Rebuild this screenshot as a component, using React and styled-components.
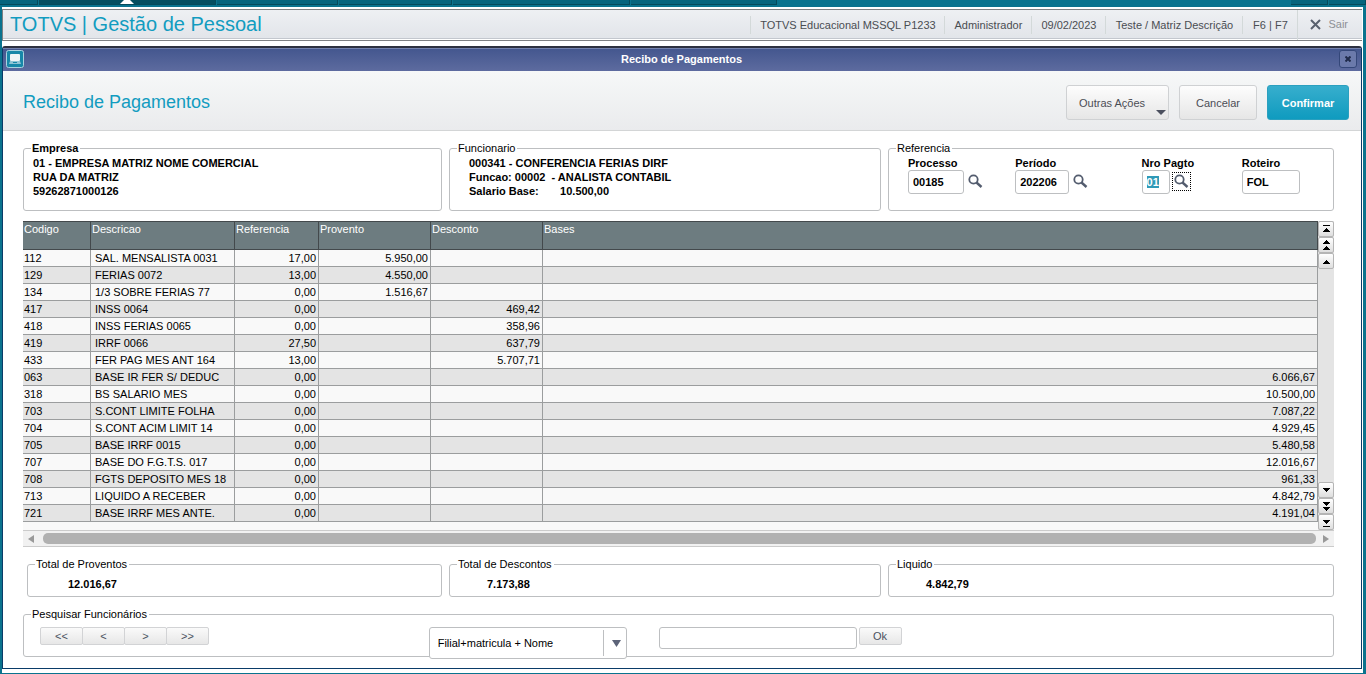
import React from "react";
import styled, { createGlobalStyle } from "styled-components";

const Global = createGlobalStyle`
  * { box-sizing: border-box; }
  body { margin: 0; background: #0a738e; font: 11px/14px "Liberation Sans", Arial, sans-serif; color: #000; }
  button, input, select { font: inherit; color: inherit; margin: 0; }
`;

const Page = styled.div`
  min-height: 100vh;
  display: flex;
  flex-direction: column;
  padding: 0 3px 1px 2px;
`;
const TabStrip = styled.nav`
  height: 7px;
  margin: 0 -3px 0 -2px;
  padding-bottom: 2px;
  display: flex;
  gap: 1px;
`;
const Tab = styled.span`
  width: ${(p) => p.$w}px;
  background: ${(p) => (p.$active ? "#054e60" : "#06647d")};
  border: solid #054a5b;
  border-width: 0 1px 1px 0;
  display: flex;
  justify-content: center;
  align-items: flex-end;
`;
const TabGap = styled.span`flex: 1;`;
const Frame = styled.div`
  flex: 1;
  display: flex;
  flex-direction: column;
  background: #fff;
  padding: 2px 1px 4px 0;
`;
const Header = styled.header`
  height: 32px;
  border: 1px solid #7e8083;
  border-right: 0;
  box-shadow: inset 0 -1px #fff, inset 0 -2px #c3c7ce;
  background: linear-gradient(#eef0f3, #e1e4e9);
  display: flex;
  align-items: stretch;
  justify-content: space-between;
`;
const AppName = styled.h1`
  margin: 0;
  padding-left: 7px;
  font-size: 20px;
  font-weight: 400;
  line-height: 29px;
  color: #129cc0;
`;
const Status = styled.div`
  display: grid;
  grid-template-columns: 194px 87px 74px 137px 55px auto;
  align-items: center;
  color: #4a4d52;
`;
const StatusItem = styled.span`
  border-left: 1px solid #d3d9d9;
  line-height: 18px;
  text-align: center;
  white-space: nowrap;
`;
const Exit = styled.button`
  align-self: stretch;
  border: 0;
  border-left: 1px solid #d3d9d9;
  background: none;
  padding: 0 14px 2px 12px;
  display: flex;
  align-items: center;
  gap: 7px;
  color: #8d9095;
`;
const Window = styled.main`
  flex: 1;
  margin-top: 5px;
  border: 1px solid #0a3b68;
  border-top: 2px solid #2d3140;
  border-radius: 3px 3px 0 0;
  display: flex;
  flex-direction: column;
`;
const TitleBar = styled.div`
  height: 23px;
  padding: 0 4px 2px 3px;
  display: grid;
  grid-template-columns: 18px 1fr 18px;
  align-items: center;
  background: linear-gradient(#43568e, #5d6b9f);
  box-shadow: inset 0 1px #7482ae;
  color: #fff;
  font-weight: 700;
  text-align: center;
`;
const CloseButton = styled.button`
  width: 18px;
  height: 18px;
  padding: 0;
  display: grid;
  place-items: center;
  border: 1px solid #344779;
  border-radius: 3px;
  background: #6b7aab;
`;
const Toolbar = styled.div`
  height: 60px;
  padding: 4px 12px 0 20px;
  display: flex;
  align-items: center;
  gap: 10px;
  border-bottom: 1px solid #d3d5d6;
  background: linear-gradient(#f6f8f8, #eaebed);
`;
const Heading = styled.h2`
  margin: 0 auto 0 0;
  padding-bottom: 2px;
  font-size: 18px;
  line-height: 22px;
  font-weight: 400;
  color: #129cc0;
`;
const ActionButton = styled.button`
  position: relative;
  height: 35px;
  width: ${(p) => p.$w}px;
  padding: 0 ${(p) => (p.$menu ? 24 : 0)}px 0 ${(p) => (p.$menu ? 12 : 0)}px;
  white-space: nowrap;
  border: 1px solid ${(p) => (p.$primary ? "#2ba0bf" : "#cfd1d3")};
  border-radius: 3px;
  background: ${(p) => (p.$primary ? "linear-gradient(#37aecd, #0f9bbf)" : "linear-gradient(#fdfdfd, #e6e6e6)")};
  color: ${(p) => (p.$primary ? "#fff" : "#4b4d55")};
  font-weight: ${(p) => (p.$primary ? 700 : 400)};
`;
const MenuMark = styled.svg`
  position: absolute;
  right: 2px;
  bottom: 4px;
`;
const Body = styled.div`
  padding: 10px 27px 11px 20px;
  display: flex;
  flex-direction: column;
  gap: 10px;
`;
const Columns = styled.div`
  display: grid;
  grid-template-columns: 419fr 432fr 446fr;
  gap: 7px;
`;
const Group = styled.fieldset`
  min-width: 0;
  margin: 0 0 0 ${(p) => p.$inset || 0}px;
  padding: 0;
  height: ${(p) => p.$h}px;
  border: 1px solid #bdbfc1;
  border-radius: 3px;
`;
const Legend = styled.legend`
  margin-left: 7px;
  padding: 0 2px 0 1px;
  font-weight: ${(p) => (p.$strong ? 700 : 400)};
`;
const Lines = styled.div`
  padding: 1px 0 0 ${(p) => p.$left}px;
  font-weight: 700;
  white-space: pre;
`;
const Total = styled.output`
  display: block;
  padding: 6px 0 0 ${(p) => p.$left}px;
  font-weight: 700;
`;
const Fields = styled.div`
  display: grid;
  grid-template-columns: 107fr 126fr 100fr 91fr;
  padding: 1px 0 0 19px;
`;
const Field = styled.div`
  display: grid;
  grid-template-columns: auto 1fr;
  column-gap: 2px;
  font-weight: 700;
  label { grid-column: 1 / 3; }
`;
const TextBox = styled.input`
  width: ${(p) => p.$w}px;
  height: ${(p) => p.$h || 24}px;
  padding: 0 4px;
  border: 1px solid #bdbfc1;
  border-radius: 3px;
  background: #fff;
  &:focus { outline: 0; }
  &::selection { background: #2f9ab8; color: #fff; }
`;
const LookupButton = styled.button`
  width: 19px;
  height: 19px;
  margin-top: 2px;
  padding: 0;
  border: 1px dotted ${(p) => (p.$focused ? "#000" : "transparent")};
  background: none;
  display: grid;
  place-items: center;
`;
const Grid = styled.section`
  display: flex;
  flex-direction: column;
`;
const GridTop = styled.div`
  display: flex;
  background: #f9f9f9;
`;
const TableArea = styled.div`
  flex: 1;
  padding-bottom: 8px;
`;
const Table = styled.table`
  width: 100%;
  table-layout: fixed;
  border-collapse: separate;
  border-spacing: 0;
`;
const Th = styled.th`
  height: 29px;
  width: ${(p) => p.$w};
  padding: 0 1px;
  vertical-align: top;
  text-align: left;
  font-weight: 400;
  color: #fff;
  background: #6d7c80;
  border: solid #43494c;
  border-width: 1px 1px 1px 0;
`;
const Row = styled.tr`
  background: #f9f9f9;
  &:nth-child(even) { background: #e4e4e4; }
`;
const Td = styled.td`
  height: 17px;
  line-height: 16px;
  padding: 0 ${(p) => (p.$num ? 2 : 0)}px 0 ${(p) => (p.$desc ? 4 : 1)}px;
  text-align: ${(p) => (p.$num ? "right" : "left")};
  border: solid #9b9d9e;
  border-width: 0 1px 1px 0;
  white-space: nowrap;
`;
const Scroller = styled.div`
  width: 16px;
  display: flex;
  flex-direction: column;
  background: #e4e4e4;
`;
const ScrollButton = styled.button`
  height: 16px;
  width: 16px;
  padding: 0;
  display: grid;
  place-items: center;
  border: 1px solid #b5b5b5;
  border-radius: 2px;
  background: linear-gradient(#fff, #dedede);
  &:nth-child(4) { margin-top: auto; }
`;
const HScroller = styled.div`
  height: 17px;
  display: flex;
  align-items: center;
  border: solid #cbcbcb;
  border-width: 1px 0;
  background: #f1f1f1;
`;
const HButton = styled.button`
  width: ${(p) => p.$w}px;
  height: 15px;
  padding: 0 5px;
  border: 0;
  background: none;
  display: flex;
  align-items: center;
  justify-content: ${(p) => (p.$end ? "flex-end" : "flex-start")};
`;
const Thumb = styled.div`
  flex: 1;
  height: 11px;
  border-radius: 5px;
  background: #b1b1b1;
`;
const Search = styled.div`
  display: grid;
  grid-template-columns: 389fr 230fr 675fr;
  align-items: start;
  padding: 6px 0 0 16px;
`;
const Inline = styled.div`
  display: flex;
  align-items: flex-start;
  gap: ${(p) => p.$gap || 0}px;
`;
const SmallButton = styled.button`
  width: ${(p) => p.$w}px;
  height: 18px;
  padding: 0;
  border: 1px solid #d2d3d5;
  border-radius: 2px;
  background: linear-gradient(#fafafa, #e7e7e7);
  color: #4b5260;
  & + & { margin-left: -1px; }
`;
const SelectBox = styled.div`
  position: relative;
  width: 198px;
  height: 32px;
  select {
    appearance: none;
    width: 100%;
    height: 100%;
    padding: 0 30px 0 8px;
    border: 1px solid #bdbfc1;
    border-radius: 3px;
    background: #fff;
  }
`;
const SelectMark = styled.span`
  position: absolute;
  top: 3px;
  right: 0;
  bottom: 3px;
  width: 24px;
  padding-left: 3px;
  border-left: 1px solid #bdbfc1;
  display: grid;
  place-items: center;
  pointer-events: none;
`;

const Lens = () => (
  <svg width="15" height="15" viewBox="0 0 15 15" fill="none" stroke="#535c6e">
    <circle cx="5.5" cy="5.500" r="4.200" strokeWidth="1.800" />
    <path d="M8.500 8.500L13.500 13" strokeWidth="2.400" />
  </svg>
);

const scrollShapes = [
  ["Primeiro", "M2 1h7v1H2zM5 4h1v1h1v1h1v1h1v1H2V7h1V6h1V5h1z"],
  ["Página acima", "M5 0h1v1h1v1h1v1h1v1H2V3h1V2h1V1h1zM5 6h1v1h1v1h1v1h1v1H2V9h1V8h1V7h1z"],
  ["Linha acima", "M5 4h1v1h1v1h1v1h1v1H2V7h1V6h1V5h1z"],
  ["Linha abaixo", "M2 3h7v1H8v1H7v1H6v1H5V6H4V5H3V4H2z"],
  ["Página abaixo", "M2 1h7v1H8v1H7v1H6v1H5V4H4V3H3V2H2zM2 6h7v1H8v1H7v1H6v1H5V9H4V8H3V7H2z"],
  ["Último", "M2 3h7v1H8v1H7v1H6v1H5V6H4V5H3V4H2zM2 9h7v1H2z"],
];

const columns = [
  ["Codigo", "68px"],
  ["Descricao", "144px"],
  ["Referencia", "84px"],
  ["Provento", "112px"],
  ["Desconto", "112px"],
  ["Bases", "auto"],
];

const rows = [
  ["112", "SAL. MENSALISTA 0031", "17,00", "5.950,00", "", ""],
  ["129", "FERIAS 0072", "13,00", "4.550,00", "", ""],
  ["134", "1/3 SOBRE FERIAS 77", "0,00", "1.516,67", "", ""],
  ["417", "INSS 0064", "0,00", "", "469,42", ""],
  ["418", "INSS FERIAS 0065", "0,00", "", "358,96", ""],
  ["419", "IRRF 0066", "27,50", "", "637,79", ""],
  ["433", "FER PAG MES ANT 164", "13,00", "", "5.707,71", ""],
  ["063", "BASE IR FER S/ DEDUC", "0,00", "", "", "6.066,67"],
  ["318", "BS SALARIO MES", "0,00", "", "", "10.500,00"],
  ["703", "S.CONT LIMITE FOLHA", "0,00", "", "", "7.087,22"],
  ["704", "S.CONT ACIM LIMIT 14", "0,00", "", "", "4.929,45"],
  ["705", "BASE IRRF 0015", "0,00", "", "", "5.480,58"],
  ["707", "BASE DO F.G.T.S. 017", "0,00", "", "", "12.016,67"],
  ["708", "FGTS DEPOSITO MES 18", "0,00", "", "", "961,33"],
  ["713", "LIQUIDO A RECEBER", "0,00", "", "", "4.842,79"],
  ["721", "BASE IRRF MES ANTE.", "0,00", "", "", "4.191,04"],
];

export default function App() {
  const payment = React.useRef(null);
  React.useEffect(() => {
    payment.current.focus();
    payment.current.select();
  }, []);
  return (
    <Page>
      <Global />
      <TabStrip>
        <Tab $w={38} />
        <Tab $w={177} $active>
          <svg width="14" height="5" viewBox="0 0 14 5"><path d="M0 5L5 0h4l5 5z" fill="#fff" /></svg>
        </Tab>
        <Tab $w={121} />
        <Tab $w={113} />
        <Tab $w={177} />
        <Tab $w={146} />
        <TabGap />
        <Tab $w={37} />
        <Tab $w={37} />
      </TabStrip>
      <Frame>
        <Header>
          <AppName>TOTVS | Gestão de Pessoal</AppName>
          <Status>
            <StatusItem>TOTVS Educacional MSSQL P1233</StatusItem>
            <StatusItem>Administrador</StatusItem>
            <StatusItem>09/02/2023</StatusItem>
            <StatusItem>Teste / Matriz Descrição</StatusItem>
            <StatusItem>F6 | F7</StatusItem>
            <Exit>
              <svg width="11" height="11" viewBox="0 0 11 11" stroke="#59616e" strokeWidth="2"><path d="M1 1l9 9M10 1l-9 9" /></svg>
              Sair
            </Exit>
          </Status>
        </Header>
        <Window>
          <TitleBar>
            <svg width="18" height="18" viewBox="0 0 18 18">
              <rect x="0.5" y="0.5" width="17" height="17" rx="2" fill="#1787a8" stroke="#a9d3df" />
              <rect x="4" y="4" width="10" height="7" rx="1" fill="#eef4f6" />
              <path d="M4 11h10l1 3H3z" fill="#8fc4d4" />
              <path d="M7 12.500h4" stroke="#1787a8" />
            </svg>
            <span>Recibo de Pagamentos</span>
            <CloseButton aria-label="Fechar">
              <svg width="6" height="6" viewBox="0 0 6 6" stroke="#1f2a4a" strokeWidth="2"><path d="M0.5 0.5l5 5M5.5 0.5l-5 5" /></svg>
            </CloseButton>
          </TitleBar>
          <Toolbar>
            <Heading>Recibo de Pagamentos</Heading>
            <ActionButton $w={103} $menu>
              Outras Ações
              <MenuMark width="10" height="5" viewBox="0 0 10 5"><path d="M0 0h10L5 5z" fill="#4b4f5e" /></MenuMark>
            </ActionButton>
            <ActionButton $w={78}>Cancelar</ActionButton>
            <ActionButton $w={82} $primary>Confirmar</ActionButton>
          </Toolbar>
          <Body>
            <Columns>
              <Group $h={70}>
                <Legend $strong>Empresa</Legend>
                <Lines $left={9}>{"01 - EMPRESA MATRIZ NOME COMERCIAL\nRUA DA MATRIZ\n59262871000126"}</Lines>
              </Group>
              <Group $h={70}>
                <Legend>Funcionario</Legend>
                <Lines $left={19}>{"000341 - CONFERENCIA FERIAS DIRF\nFuncao: 00002  - ANALISTA CONTABIL\nSalario Base:       10.500,00"}</Lines>
              </Group>
              <Group $h={70}>
                <Legend>Referencia</Legend>
                <Fields>
                  <Field>
                    <label htmlFor="processo">Processo</label>
                    <TextBox id="processo" $w={56} defaultValue="00185" />
                    <LookupButton aria-label="Pesquisar processo"><Lens /></LookupButton>
                  </Field>
                  <Field>
                    <label htmlFor="periodo">Período</label>
                    <TextBox id="periodo" $w={54} defaultValue="202206" />
                    <LookupButton aria-label="Pesquisar período"><Lens /></LookupButton>
                  </Field>
                  <Field>
                    <label htmlFor="pagto">Nro Pagto</label>
                    <TextBox id="pagto" ref={payment} $w={28} defaultValue="01" />
                    <LookupButton aria-label="Pesquisar pagamento" $focused><Lens /></LookupButton>
                  </Field>
                  <Field>
                    <label htmlFor="roteiro">Roteiro</label>
                    <TextBox id="roteiro" $w={58} defaultValue="FOL" />
                  </Field>
                </Fields>
              </Group>
            </Columns>
            <Grid>
              <GridTop>
                <TableArea>
                  <Table>
                    <thead>
                      <tr>{columns.map(([name, w]) => <Th key={name} $w={w}>{name}</Th>)}</tr>
                    </thead>
                    <tbody>
                      {rows.map((r) => (
                        <Row key={r[0]}>
                          {r.map((v, i) => <Td key={i} $num={i > 1} $desc={i === 1}>{v}</Td>)}
                        </Row>
                      ))}
                    </tbody>
                  </Table>
                </TableArea>
                <Scroller>
                  {scrollShapes.map(([name, d]) => (
                    <ScrollButton key={name} aria-label={name}>
                      <svg width="11" height="11" viewBox="0 0 11 11"><path d={d} /></svg>
                    </ScrollButton>
                  ))}
                </Scroller>
              </GridTop>
              <HScroller>
                <HButton $w={20} aria-label="Rolar à esquerda">
                  <svg width="6" height="8" viewBox="0 0 6 8"><path d="M6 0v8L0 4z" fill="#999" /></svg>
                </HButton>
                <Thumb />
                <HButton $w={18} $end aria-label="Rolar à direita">
                  <svg width="6" height="8" viewBox="0 0 6 8"><path d="M0 0v8l6-4z" fill="#999" /></svg>
                </HButton>
              </HScroller>
            </Grid>
            <Columns>
              <Group $h={40} $inset={4}>
                <Legend>Total de Proventos</Legend>
                <Total $left={40}>12.016,67</Total>
              </Group>
              <Group $h={40}>
                <Legend>Total de Descontos</Legend>
                <Total $left={37}>7.173,88</Total>
              </Group>
              <Group $h={40}>
                <Legend>Liquido</Legend>
                <Total $left={37}>4.842,79</Total>
              </Group>
            </Columns>
            <Group $h={50}>
              <Legend>Pesquisar Funcionários</Legend>
              <Search>
                <Inline>
                  {["<<", "<", ">", ">>"].map((t) => <SmallButton key={t} $w={43}>{t}</SmallButton>)}
                </Inline>
                <SelectBox>
                  <select aria-label="Ordem da pesquisa"><option>Filial+matricula + Nome</option></select>
                  <SelectMark>
                    <svg width="9" height="7" viewBox="0 0 9 7"><path d="M0 0h9L4.500 7z" fill="#5c6378" /></svg>
                  </SelectMark>
                </SelectBox>
                <Inline $gap={2}>
                  <TextBox aria-label="Pesquisar" $w={198} $h={22} />
                  <SmallButton $w={43}>Ok</SmallButton>
                </Inline>
              </Search>
            </Group>
          </Body>
        </Window>
      </Frame>
    </Page>
  );
}
